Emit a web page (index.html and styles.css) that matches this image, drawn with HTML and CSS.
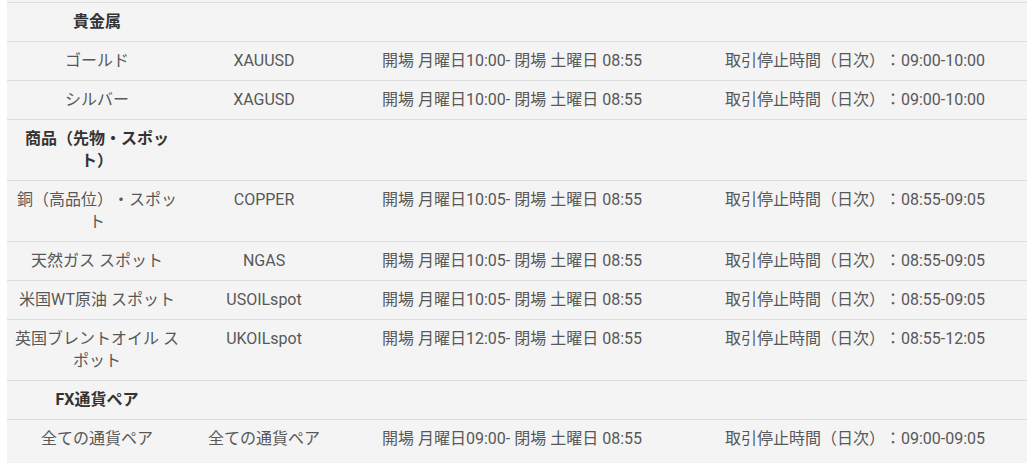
FILE: index.html
```html
<!DOCTYPE html>
<html lang="ja">
<head>
    <meta charset="UTF-8">
    <meta name="viewport" content="width=device-width, initial-scale=1.0">
    <title>取引時間</title>
    <link rel="stylesheet" href="styles.css">
</head>
<body>
   <div class="wrap">
    <table class="hours">
        <colgroup>
            <col class="c-name">
            <col class="c-symbol">
            <col class="c-open">
            <col class="c-break">
        </colgroup>
        <tr class="group">
            <td>貴金属</td><td></td><td></td><td></td>
        </tr>
        <tr>
            <td>ゴールド</td>
            <td>XAUUSD</td>
            <td>開場 月曜日10:00- 閉場 土曜日 08:55</td>
            <td>取引停止時間（日次）：09:00-10:00</td>
        </tr>
        <tr>
            <td>シルバー</td>
            <td>XAGUSD</td>
            <td>開場 月曜日10:00- 閉場 土曜日 08:55</td>
            <td>取引停止時間（日次）：09:00-10:00</td>
        </tr>
        <tr class="group">
            <td>商品（先物・スポット）</td><td></td><td></td><td></td>
        </tr>
        <tr>
            <td>銅（高品位）・スポット</td>
            <td>COPPER</td>
            <td>開場 月曜日10:05- 閉場 土曜日 08:55</td>
            <td>取引停止時間（日次）：08:55-09:05</td>
        </tr>
        <tr>
            <td>天然ガス スポット</td>
            <td>NGAS</td>
            <td>開場 月曜日10:05- 閉場 土曜日 08:55</td>
            <td>取引停止時間（日次）：08:55-09:05</td>
        </tr>
        <tr>
            <td>米国WT原油 スポット</td>
            <td>USOILspot</td>
            <td>開場 月曜日10:05- 閉場 土曜日 08:55</td>
            <td>取引停止時間（日次）：08:55-09:05</td>
        </tr>
        <tr>
            <td>英国ブレントオイル スポット</td>
            <td>UKOILspot</td>
            <td>開場 月曜日12:05- 閉場 土曜日 08:55</td>
            <td>取引停止時間（日次）：08:55-12:05</td>
        </tr>
        <tr class="group">
            <td>FX通貨ペア</td><td></td><td></td><td></td>
        </tr>
        <tr>
            <td>全ての通貨ペア</td>
            <td>全ての通貨ペア</td>
            <td>開場 月曜日09:00- 閉場 土曜日 08:55</td>
            <td>取引停止時間（日次）：09:00-09:05</td>
        </tr>
    </table>
   </div>
</body>
</html>
```

FILE: styles.css
```css
body {
    margin: 0;
    padding: 0;
    background-color: #ffffff;
    font-family: Roboto, "Noto Sans CJK JP", sans-serif;
}
.wrap {
    margin: 0 7px;
    padding-top: 2px;
    min-height: 461px;
    background-color: #f4f4f4;
}
.hours {
    width: 100%;
    border-collapse: collapse;
    table-layout: fixed;
    font-size: 16px;
    line-height: 22px;
    color: #585858;
    text-spacing-trim: space-all;
}
.c-name {
    width: 180px;
}
.c-symbol {
    width: 154px;
}
.c-open {
    width: 342px;
}
.hours tr {
    border-top: 1px solid #dddddd;
}
.hours td {
    padding: 8px 5px;
    text-align: center;
    vertical-align: top;
}
.hours .group td {
    font-weight: bold;
    color: #333333;
}
```
